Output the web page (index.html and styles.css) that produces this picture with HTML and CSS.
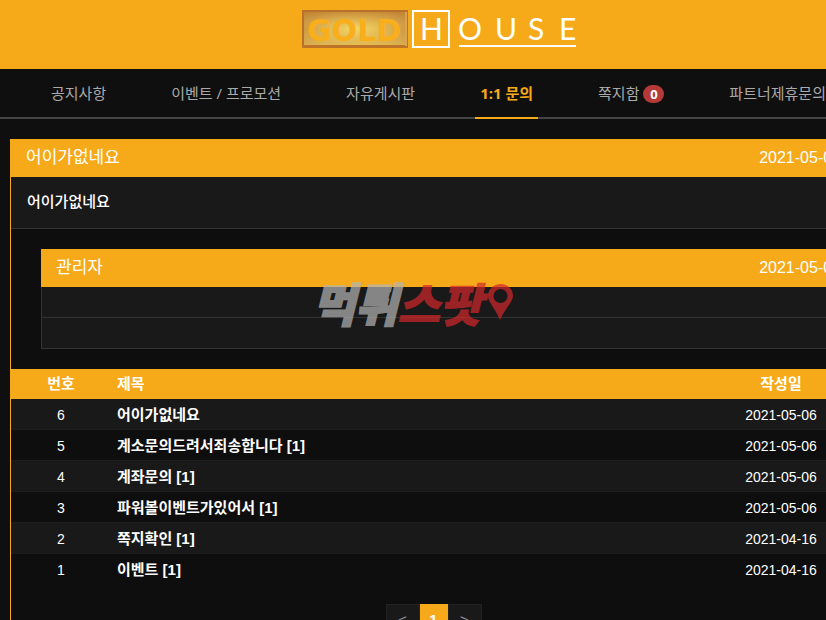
FILE: index.html
```html
<!DOCTYPE html>
<html lang="ko">
<head>
  <meta charset="UTF-8">
  <title>GOLD HOUSE - 1:1 문의</title>
  <link rel="stylesheet" href="styles.css">
</head>
<body>
  <!-- Header -->
  <header class="header">
    <a href="#home" class="logo">
      <svg width="274" height="38" viewBox="0 0 274 38">
        <defs>
          <radialGradient id="gold" cx="0.5" cy="0.5" r="0.6">
            <stop offset="0" stop-color="#f3d868"/>
            <stop offset="0.6" stop-color="#dbab4a"/>
            <stop offset="1" stop-color="#c0843a"/>
          </radialGradient>
          <linearGradient id="shine" x1="0" y1="0" x2="0" y2="1">
            <stop offset="0" stop-color="#bd7b2c" stop-opacity="0.6"/>
            <stop offset="0.5" stop-color="#e9c35a" stop-opacity="0"/>
            <stop offset="1" stop-color="#ecd060" stop-opacity="0.7"/>
          </linearGradient>
        </defs>
        <rect width="106" height="38" fill="url(#gold)"/>
        <rect width="106" height="38" fill="url(#shine)"/>
        <path d="M0 0H106L103 2H2V36L0 38Z" fill="#b9702a"/>
        <path d="M0 38L2 35H103V2L106 0V38Z" fill="#bd7428"/>
        <path d="M104 2V36" stroke="#f2d489"/>
        <text class="logo-gold" x="5" y="31">GOLD</text>
        <rect x="111" y="1" width="36" height="36" fill="none" stroke="#fff" stroke-width="2"/>
        <text class="logo-house" x="118 156 193 226 257" y="30">HOUSE</text>
        <path d="M157 36H274" stroke="#fff" stroke-width="2"/>
      </svg>
    </a>
  </header>

  <!-- Navigation -->
  <nav class="nav">
    <a href="#notice">공지사항</a>
    <a href="#event">이벤트 / 프로모션</a>
    <a href="#free">자유게시판</a>
    <a href="#qna" class="active">1:1 문의</a>
    <a href="#message">쪽지함 <span class="badge">0</span></a>
    <a href="#partner">파트너제휴문의</a>
  </nav>

  <!-- Main -->
  <main class="board">
    <article class="post">
      <h2 class="post-title"><span>어이가없네요</span><time>2021-05-06</time></h2>
      <p class="post-body">어이가없네요</p>
      <section class="reply">
        <h2 class="post-title"><span>관리자</span><time>2021-05-06</time></h2>
        <div class="reply-row"></div>
        <div class="reply-row"></div>
      </section>
    </article>

    <table class="list">
      <thead>
        <tr>
          <th class="num">번호</th>
          <th class="subject">제목</th>
          <th class="date">작성일</th>
        </tr>
      </thead>
      <tbody>
        <tr>
          <td class="num">6</td>
          <td class="subject"><a href="#6">어이가없네요</a></td>
          <td class="date">2021-05-06</td>
        </tr>
        <tr>
          <td class="num">5</td>
          <td class="subject"><a href="#5">계소문의드려서죄송합니다 [1]</a></td>
          <td class="date">2021-05-06</td>
        </tr>
        <tr>
          <td class="num">4</td>
          <td class="subject"><a href="#4">계좌문의 [1]</a></td>
          <td class="date">2021-05-06</td>
        </tr>
        <tr>
          <td class="num">3</td>
          <td class="subject"><a href="#3">파워볼이벤트가있어서 [1]</a></td>
          <td class="date">2021-05-06</td>
        </tr>
        <tr>
          <td class="num">2</td>
          <td class="subject"><a href="#2">쪽지확인 [1]</a></td>
          <td class="date">2021-04-16</td>
        </tr>
        <tr>
          <td class="num">1</td>
          <td class="subject"><a href="#1">이벤트 [1]</a></td>
          <td class="date">2021-04-16</td>
        </tr>
      </tbody>
    </table>

    <div class="paging">
      <button type="button">&lt;</button>
      <button type="button" class="current">1</button>
      <button type="button">&gt;</button>
    </div>
  </main>

  <!-- Watermark over the page -->
  <div class="watermark">
    <span class="mark-gray">먹튀</span><span class="mark-red">스팟</span>
    <svg width="25" height="36" viewBox="0 0 25 36">
      <path fill="#d2282c" fill-rule="evenodd" d="M12.500 0C5.500 0 0 5 0 12C0 18 7 24 12 36C17 24 25 18 25 12C25 5 19.500 0 12.500 0ZM12.500 5A7 7 0 1 1 12.500 19A7 7 0 1 1 12.500 5Z"/>
    </svg>
  </div>
</body>
</html>
```
FILE: styles.css
```css
/* General Styles */
html {
  overflow-x: hidden;
}

body {
  margin: 0;
  min-width: 866px;
  background-color: #100f10;
  color: #fff;
  font-family: "Liberation Sans", "Noto Sans CJK KR", sans-serif;
  font-size: 15px;
}

a {
  color: inherit;
  text-decoration: none;
}

/* Header */
.header {
  display: flex;
  justify-content: center;
  padding: 10px 0 21px 12px;
  background-color: #f6aa1a;
}

.logo svg {
  display: block;
}

.logo-gold {
  font: bold 30px "DejaVu Sans", sans-serif;
  fill: #f9ae1c;
}

.logo-house {
  font: 30px Lato, sans-serif;
  fill: #fff;
}

/* Navigation */
.nav {
  display: flex;
  gap: 55px;
  height: 48px;
  padding-left: 46px;
  border-bottom: 2px solid #444;
  color: #aaa;
  font-family: "Open Sans", "Noto Sans CJK KR", sans-serif;
  line-height: 48px;
  white-space: nowrap;
}

.nav a {
  height: 48px;
  padding: 0 5px;
  border-bottom: 2px solid transparent;
}

.nav a.active {
  border-color: #f6aa1a;
  color: #f6aa1a;
  font-weight: bold;
}

.badge {
  display: inline-block;
  width: 21px;
  border-radius: 9px;
  background-color: #b53a37;
  color: #fff;
  font-size: 13px;
  font-weight: bold;
  line-height: 18px;
  text-align: center;
}

/* Board */
.board {
  margin: 20px 10px 0;
  border-left: 1px solid #f6aa1a;
  background-color: #0e0e0e;
}

.post-title {
  display: flex;
  justify-content: space-between;
  margin: 0;
  padding: 0 15px;
  background-color: #f6aa1a;
  font-size: 17px;
  font-weight: normal;
  line-height: 38px;
}

.post-title time {
  font-size: 16px;
}

.post-body {
  margin: 0;
  padding: 0 16px 2px;
  border-bottom: 1px solid #333;
  background-color: #191919;
  font-weight: 500;
  line-height: 49px;
}

.reply {
  margin: 20px 0 20px 30px;
}

.reply-row {
  height: 30px;
  border: 1px solid #333;
  border-top: 0;
  background-color: #191919;
}

.list {
  width: 100%;
  border-collapse: collapse;
}

.list th {
  height: 30px;
  padding: 0;
  background-color: #f6aa1a;
  line-height: 30px;
}

.list td {
  padding: 2px 0 0;
  border-bottom: 1px solid #1d1d1d;
  font-size: 14px;
  line-height: 28px;
}

.list tbody tr:nth-child(odd) {
  background-color: #191919;
}

.list tbody tr:last-child {
  background-color: #0e0e0e;
}

.list tbody tr:last-child td {
  border-color: #0e0e0e;
}

.list .num {
  width: 100px;
}

.list .subject {
  padding-left: 6px;
  font-size: 15px;
  font-weight: bold;
  text-align: left;
}

.list .date {
  width: 150px;
}

.list .num,
.list .date {
  text-align: center;
}

/* Paging */
.paging {
  display: flex;
  justify-content: center;
  padding: 19px 0 40px;
}

.paging button {
  width: 34px;
  height: 30px;
  padding: 0;
  border: 1px solid #222;
  background-color: #191919;
  color: #999;
  font-family: inherit;
  font-size: 15px;
}

.paging .current {
  width: 28px;
  border-color: #f6aa1a;
  background-color: #f6aa1a;
  color: #fff;
  font-weight: bold;
}

/* Watermark */
.watermark {
  position: absolute;
  top: 279px;
  left: 0;
  right: 0;
  display: flex;
  justify-content: center;
  align-items: center;
  font-family: "Noto Sans CJK KR", sans-serif;
  font-size: 46px;
  font-style: italic;
  font-weight: 900;
  line-height: 46px;
  opacity: 0.7;
  pointer-events: none;
}

.mark-gray {
  color: #b4b4b4;
  -webkit-text-stroke: 2px #b4b4b4;
}

.mark-red {
  color: #d2282c;
  -webkit-text-stroke: 1px #d2282c;
}

.watermark svg {
  margin-left: 6px;
}
```
